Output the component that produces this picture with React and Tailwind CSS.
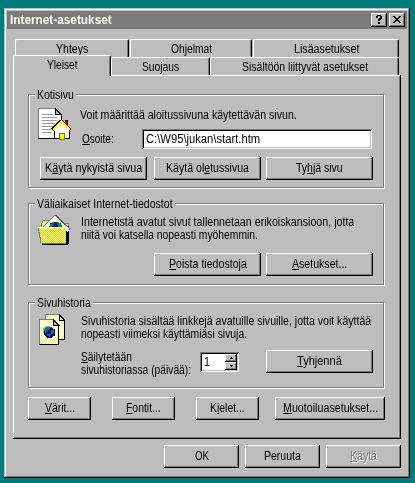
import React, { useLayoutEffect, useRef } from "react";

// Text line whose glyphs are condensed to fill the width of its box.
function T({ className = "", children }) {
  const box = useRef(null);
  const inner = useRef(null);
  useLayoutEffect(() => {
    const k = box.current.clientWidth / inner.current.offsetWidth;
    inner.current.style.transform = `scaleX(${k})`;
  }, []);
  return (
    <div ref={box} className={`h-[13px] shrink-0 leading-[14px] ${className}`}>
      <span ref={inner} className="inline-block origin-left whitespace-nowrap">{children}</span>
    </div>
  );
}

function U({ children }) {
  return <span className="underline decoration-1 underline-offset-1">{children}</span>;
}

function Button({ className = "", children }) {
  return (
    <button className={`flex h-[23px] shrink-0 justify-center bg-[#bdbdbd] pt-[4px] text-left shadow-[inset_-1px_-1px_#000,inset_1px_1px_#fff,inset_-2px_-2px_#7b7b7b] ${className}`}>
      {children}
    </button>
  );
}

function Tab({ className = "", children }) {
  return (
    <div className={`flex justify-center rounded-t-[2px] border-t border-r border-l border-t-white border-r-black border-l-white bg-[#bdbdbd] shadow-[inset_-1px_0_#7b7b7b] ${className}`}>
      {children}
    </div>
  );
}

function Group({ className = "", title, titleWidth, children }) {
  return (
    <section className={`flex w-[356px] flex-col border border-[#7b7b7b] shadow-[1px_1px_#fff,inset_1px_1px_#fff] ${className}`}>
      <div className="-mt-[7px] ml-[6px] flex h-[13px] self-start bg-[#bdbdbd] px-[2px]">
        <T className={titleWidth}>{title}</T>
      </div>
      {children}
    </section>
  );
}

// Path of single-pixel squares inside a rectangle, kept where test(x, y) holds.
function pixels(x0, y0, x1, y1, test) {
  let d = "";
  for (let y = y0; y < y1; y++) {
    for (let x = x0; x < x1; x++) {
      if (test(x, y)) d += `M${x} ${y}h1v1h-1z`;
    }
  }
  return d;
}

function HomeIcon() {
  return (
    <svg width="34" height="34" viewBox="0 0 34 34" shapeRendering="crispEdges" className="shrink-0">
      <path d="M1 1H18L24 7V31H1Z" fill="#fff" />
      <path d="M1.500 31V1.500H18" fill="none" stroke="#7b7b7b" />
      <path d="M18 1V7H24Z" fill="#bdbdbd" />
      <path d="M18 1.500L24.500 8V31.500H1" fill="none" stroke="#000" />
      <path d="M18.500 1V7.500H24" fill="none" stroke="#000" />
      <path d="M5 7.500H16M5 10.500H20M5 13.500H20M5 16.500H18M5 19.500H17M5 22.500H15M5 25.500H14" stroke="#9c9c9c" />
      <path d="M24.500 15L17 23V32H33V23Z" fill="#fff" />
      <path d="M17.500 24V31.500H32.500V23" fill="none" stroke="#000" />
      <path d="M15.500 23L24.500 14L33.500 23" fill="none" stroke="#000" strokeWidth="3.500" />
      <path d="M16 23L24.500 14.500L33 23" fill="none" stroke="#ffff00" strokeWidth="2" />
      <path d="M28 14H30V19L28 17Z" fill="#de0000" />
      <path d="M30 14H31V20L30 19Z" fill="#7b0000" />
      <path d="M28 13H31V14H28Z" fill="#000" />
      <path d="M22.500 26.500H27.500V32H22.500Z" fill="#ffff00" stroke="#7b7b00" />
    </svg>
  );
}

const FOLDER_CHECKER = pixels(2, 15, 29, 29, (x, y) => (x + y) % 2 === 0 && x > 1 + (y - 14) / 5);

function FolderIcon() {
  return (
    <svg width="34" height="32" viewBox="0 0 34 32" shapeRendering="crispEdges" className="shrink-0">
      <path d="M4.500 15V9.500L6.500 6.500H12L14 9.500H31V15Z" fill="#efef8c" stroke="#7b7b7b" />
      <path d="M29 12H32V29L30 31H6V29H28Z" fill="#000" />
      <path d="M18 1L6 13V16H31V14Z" fill="#fff" />
      <path d="M6 13L18 1" fill="none" stroke="#7b7b7b" />
      <path d="M12 14V12H13V9H15V8H22V9H24V11H25V14Z" fill="#0000c6" />
      <path d="M13 14V10H15V8H17V10H16V12H15V14ZM20 8H22V9H24V11H25V13H21V11H20Z" fill="#009c00" />
      <path d="M18.500 1L33 15.500" fill="none" stroke="#5a5a5a" />
      <path d="M29 12L32 15V17L30 18L28 15Z" fill="#fff" />
      <path d="M1 14H29V29H5L4 26Z" fill="#ffff00" />
      <path d={FOLDER_CHECKER} fill="#c6c6bd" />
      <path d="M1.500 14V18L2.500 19V23L3.500 24V29" fill="none" stroke="#7b7b7b" />
      <path d="M1 13.500H29" stroke="#fff" />
      <path d="M5 29.500H29" stroke="#7b7b00" />
      <path d="M5 30.500H30" stroke="#000" />
    </svg>
  );
}

const BACK_DOTS = pixels(8, 3, 26, 26, (x, y) => y % 2 === 1 && (x + y) % 4 === 0 && (x < 20 || y > 8));
const FRONT_DOTS = pixels(2, 8, 20, 31, (x, y) => y % 2 === 0 && (x + y) % 4 === 1 && (x < 14 || y > 13));

function HistoryIcon() {
  return (
    <svg width="29" height="33" viewBox="0 0 29 33" shapeRendering="crispEdges" className="shrink-0">
      <path d="M7.500 26V1.500H21L26.500 7V26Z" fill="#ffffde" stroke="#7b7b7b" />
      <path d={BACK_DOTS} fill="#ffff00" />
      <path d="M21.500 1.500V7.500H27" fill="none" stroke="#000" />
      <path d="M21 1.500L26.500 7V26.500H21" fill="none" stroke="#000" />
      <path d="M1.500 31V6.500H15L20.500 12V31Z" fill="#ffffde" stroke="#7b7b7b" />
      <path d={FRONT_DOTS} fill="#ffff00" />
      <path d="M15.500 6.500V12.500H21Z" fill="#bdbdbd" stroke="#000" />
      <path d="M15 6.500L20.500 12V31.500H1" fill="none" stroke="#000" />
      <circle cx="11" cy="19" r="5.500" fill="#0000b5" />
      <path d="M6 16L9 14L13 14L11 17L7 20ZM13 17L16 16L16 20L13 21ZM9 21H13L12 24L9 23Z" fill="#00844a" />
      <path d="M5.500 20V16L8 13.500H12" fill="none" stroke="#8cb5b5" />
      <path d="M16.500 16V22L13 24.500H9" fill="none" stroke="#000" />
    </svg>
  );
}

function SpinArrow({ up }) {
  return (
    <div className="flex h-[8px] w-[12px] items-center justify-center bg-[#bdbdbd] shadow-[inset_-1px_-1px_#000,inset_1px_1px_#fff,inset_-2px_-2px_#7b7b7b]">
      <svg width="3" height="2" viewBox="0 0 3 2" shapeRendering="crispEdges">
        <path d={up ? "M1 0H2V1H3V2H0V1H1Z" : "M0 0H3V1H2V2H1V1H0Z"} fill="#000" />
      </svg>
    </div>
  );
}

const SUNKEN =
  "bg-white shadow-[inset_1px_1px_#7b7b7b,inset_-1px_-1px_#fff,inset_2px_2px_#000,inset_-2px_-2px_#bdbdbd]";

export default function App() {
  return (
    <div className="h-[483px] w-[415px] overflow-hidden bg-[#007b7b] pt-[8px] pl-[4px] font-['Liberation_Sans',Arial,sans-serif] text-[12.5px] text-black">
      <main className="flex h-[470px] w-[406px] flex-col bg-[#bdbdbd] p-[3px] shadow-[inset_-1px_-1px_#000,inset_1px_1px_#bdbdbd,inset_-2px_-2px_#7b7b7b,inset_2px_2px_#fff]">
        <header className="flex h-[18px] shrink-0 items-start bg-[#7b7b7b] pt-[2px] pr-[2px] pl-[3px]">
          <T className="mr-auto w-[102px] font-bold text-[#fffff0]">Internet-asetukset</T>
          <button className="flex h-[14px] w-[16px] items-center justify-center bg-[#bdbdbd] shadow-[inset_-1px_-1px_#000,inset_1px_1px_#fff,inset_-2px_-2px_#7b7b7b]">
            <svg width="16" height="14" viewBox="0 0 16 14" shapeRendering="crispEdges">
              <path d="M6 2H10V3H11V6H10V7H9V8H7V6H8V5H9V3H7V5H5V3H6ZM7 9H9V11H7Z" fill="#000" />
            </svg>
          </button>
          <button className="ml-[2px] flex h-[14px] w-[16px] items-center justify-center bg-[#bdbdbd] shadow-[inset_-1px_-1px_#000,inset_1px_1px_#fff,inset_-2px_-2px_#7b7b7b]">
            <svg width="16" height="14" viewBox="0 0 16 14" shapeRendering="crispEdges">
              <path d="M4 3H6V4H7V5H9V4H10V3H12V4H11V5H10V6H9V7H10V8H11V9H12V10H10V9H9V8H7V9H6V10H4V9H5V8H6V7H7V6H6V5H5V4H4Z" fill="#000" />
            </svg>
          </button>
        </header>

        <nav className="mt-[10px] flex shrink-0 flex-col">
          <div className="ml-[8px] flex h-[18px] gap-[1px]">
            <Tab className="w-[114px] pt-[2px]"><T className="w-[32px]">Yhteys</T></Tab>
            <Tab className="w-[122px] pt-[2px]"><T className="w-[41px]">Ohjelmat</T></Tab>
            <Tab className="w-[146px] pt-[2px]"><T className="w-[65px]">Lisäasetukset</T></Tab>
          </div>
          <div className="-mt-[2px] ml-[6px] flex h-[20px] items-end">
            <Tab className="z-10 -mb-[1px] h-[21px] w-[98px] pt-[2px]"><T className="w-[31px]">Yleiset</T></Tab>
            <Tab className="h-[18px] w-[99px] pt-[2px]"><T className="w-[37px]">Suojaus</T></Tab>
            <Tab className="h-[18px] w-[189px] pt-[2px]"><T className="w-[126px]">Sisältöön liittyvät asetukset</T></Tab>
          </div>
        </nav>

        <div className="ml-[6px] flex h-[364px] w-[388px] shrink-0 flex-col pt-[19px] pl-[15px] shadow-[inset_-1px_-1px_#000,inset_1px_1px_#fff,inset_-2px_-2px_#7b7b7b]">
          <Group className="h-[94px]" title="Kotisivu" titleWidth="w-[37px]">
            <div className="mt-[6px] ml-[8px] flex">
              <HomeIcon />
              <div className="ml-[9px] flex flex-col pt-[1px]">
                <T className="w-[217px]">Voit määrittää aloitussivuna käytettävän sivun.</T>
                <div className="mt-[8px] ml-[2px] flex">
                  <T className="mt-[3px] w-[32px]"><U>O</U>soite:</T>
                  <div className={`ml-[28px] h-[20px] w-[230px] pt-[3px] pl-[4px] ${SUNKEN}`}>
                    <T className="w-[114px]">C:\W95\jukan\start.htm</T>
                  </div>
                </div>
              </div>
            </div>
            <div className="mt-[8px] ml-[11px] flex">
              <Button className="w-[107px]"><T className="w-[97px]">K<U>ä</U>ytä nykyistä sivua</T></Button>
              <Button className="ml-[7px] w-[107px]"><T className="w-[83px]">Käytä ol<U>e</U>tussivua</T></Button>
              <Button className="ml-[5px] w-[107px]"><T className="w-[47px]">Ty<U>h</U>jä sivu</T></Button>
            </div>
          </Group>

          <Group className="mt-[15px] h-[82px]" title="Väliaikaiset Internet-tiedostot" titleWidth="w-[136px]">
            <div className="mt-[4px] ml-[8px] flex h-[33px]">
              <FolderIcon />
              <div className="ml-[10px] flex flex-col pt-[1px]">
                <T className="w-[273px]">Internetistä avatut sivut tallennetaan erikoiskansioon, jotta</T>
                <T className="w-[177px]">niitä voi katsella nopeasti myöhemmin.</T>
              </div>
            </div>
            <div className="mt-[6px] ml-[125px] flex">
              <Button className="w-[107px]"><T className="w-[78px]"><U>P</U>oista tiedostoja</T></Button>
              <Button className="ml-[5px] w-[107px]"><T className="w-[55px]"><U>A</U>setukset...</T></Button>
            </div>
          </Group>

          <Group className="mt-[17px] h-[86px]" title="Sivuhistoria" titleWidth="w-[54px]">
            <div className="mt-[4px] ml-[9px] flex h-[33px]">
              <HistoryIcon />
              <div className="ml-[14px] flex flex-col pt-[1px]">
                <T className="w-[290px]">Sivuhistoria sisältää linkkejä avatuille sivuille, jotta voit käyttää</T>
                <T className="w-[166px]">nopeasti viimeksi käyttämiäsi sivuja.</T>
              </div>
            </div>
            <div className="mt-[4px] ml-[52px] flex">
              <div className="w-[119px]">
                <T className="w-[51px]"><U>S</U>äilytetään</T>
                <T className="w-[110px]">sivuhistoriassa (päivää):</T>
              </div>
              <div className={`mt-[2px] flex h-[20px] w-[39px] pt-[2px] pl-[4px] ${SUNKEN}`}>
                <T className="mt-[1px] w-[6px]">1</T>
                <div className="ml-[15px] flex flex-col">
                  <SpinArrow up />
                  <SpinArrow />
                </div>
              </div>
              <Button className="ml-[27px] w-[107px]"><T className="w-[45px]"><U>T</U>yhjennä</T></Button>
            </div>
          </Group>

          <div className="mt-[9px] flex">
            <Button className="w-[63px]"><T className="w-[30px]"><U>V</U>ärit...</T></Button>
            <Button className="ml-[21px] w-[63px]"><T className="w-[35px]"><U>F</U>ontit...</T></Button>
            <Button className="ml-[21px] w-[63px]"><T className="w-[35px]">K<U>i</U>elet...</T></Button>
            <Button className="ml-[16px] w-[110px]"><T className="w-[95px]"><U>M</U>uotoiluasetukset...</T></Button>
          </div>
        </div>

        <footer className="mt-[6px] ml-[157px] flex gap-[6px]">
          <Button className="w-[75px]"><T className="w-[14px]">OK</T></Button>
          <Button className="w-[75px]"><T className="w-[37px]">Peruuta</T></Button>
          <Button className="w-[75px] text-[#7b7b7b] [text-shadow:1px_1px_#fff]"><T className="w-[27px]"><U>K</U>äytä</T></Button>
        </footer>
      </main>
    </div>
  );
}
